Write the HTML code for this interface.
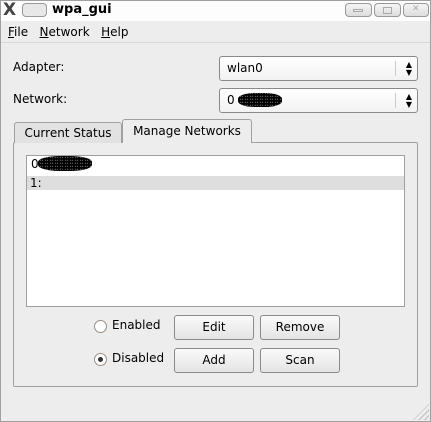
<!DOCTYPE html>
<html><head><meta charset="utf-8"><style>
*{box-sizing:border-box;margin:0;padding:0}
body{width:431px;height:422px;background:#ededed;font-family:"DejaVu Sans","Liberation Sans",sans-serif;font-size:12px;color:#000;position:relative;overflow:hidden}
.a{position:absolute}
.frame{left:0;top:0;width:431px;height:422px;border:1px solid #a0a0a0}
.btn{position:absolute;border:1px solid #8a8a8a;border-radius:3px;background:linear-gradient(#fafafa,#e4e4e4);text-align:center;line-height:22px;font-size:12px}
.combo{position:absolute;border:1px solid #8a8a8a;border-radius:3px;background:linear-gradient(#fff,#f2f2f2);padding-left:7px;line-height:22px}
.combo .sep{position:absolute;right:21px;top:4px;height:15px;border-left:1px solid #ccc}
.combo .ar{position:absolute;right:5px;font-size:8px;line-height:8px;top:4px}
.radio{position:absolute;width:13px;height:13px;border:1px solid #9a8f86;border-radius:50%;background:#fff}
.scr{position:absolute;border-radius:40%;background:
repeating-linear-gradient(90deg,rgba(0,0,0,.9) 0 2px,transparent 2px 3px,rgba(0,0,0,.8) 3px 4px,transparent 4px 5px),
repeating-linear-gradient(0deg,#000 0 1px,#555 1px 2px,#111 2px 3px)}
u{text-decoration:underline}
</style></head><body>
<div class="a frame"></div>
<div class="a" style="left:1px;top:1px;width:429px;height:20px;background:#fdfdfd"></div>
<div class="a" style="left:3px;top:0px;font-size:17px;line-height:20px;color:#444;font-weight:bold">X</div>
<div class="a" style="left:22px;top:3px;width:25px;height:14px;border:1px solid #999;border-radius:4px;background:#e8e8e8"></div>
<div class="a" style="left:52px;top:2px;font-weight:bold;font-size:13px;line-height:16px">wpa_gui</div>
<div class="a" style="left:345px;top:3px;width:27px;height:14px;border:1px solid #999;border-radius:4px;background:linear-gradient(#f5f5f5,#ddd)"></div>
<div class="a" style="left:374px;top:3px;width:27px;height:14px;border:1px solid #999;border-radius:4px;background:linear-gradient(#f5f5f5,#ddd)"></div>
<div class="a" style="left:403px;top:3px;width:26px;height:14px;border:1px solid #999;border-radius:4px;background:linear-gradient(#f5f5f5,#ddd)"></div>
<div class="a" style="left:353px;top:9px;width:10px;height:3px;border:1px solid #aaa"></div>
<div class="a" style="left:383px;top:7px;width:9px;height:7px;border:1px solid #aaa"></div>
<div class="a" style="left:412px;top:4px;font-size:9px;color:#aaa">✕</div>
<div class="a" style="left:1px;top:21px;width:429px;height:22px;background:#ededed;border-bottom:1px solid #d8d8d8"></div>
<div class="a" style="left:8px;top:24px;line-height:16px"><u>F</u>ile&nbsp;&nbsp;&nbsp;<u>N</u>etwork&nbsp;&nbsp;&nbsp;<u>H</u>elp</div>
<div class="a" style="left:13px;top:60px">Adapter:</div>
<div class="a" style="left:13px;top:92px">Network:</div>
<div class="combo" style="left:219px;top:56px;width:199px;height:25px">wlan0<div class="sep"></div><div class="ar">▲<br>▼</div></div>
<div class="combo" style="left:219px;top:88px;width:199px;height:25px">0<div class="sep"></div><div class="ar">▲<br>▼</div></div>
<div class="scr" style="left:238px;top:93px;width:44px;height:14px"></div>
<div class="a" style="left:13px;top:142px;width:405px;height:245px;border:1px solid #a0a0a0;border-radius:2px"></div>
<div class="a" style="left:14px;top:122px;width:108px;height:21px;border:1px solid #a0a0a0;border-bottom:none;border-radius:3px 3px 0 0;background:#e2e2e2;text-align:center;line-height:20px">Current Status</div>
<div class="a" style="left:122px;top:119px;width:130px;height:24px;border:1px solid #a0a0a0;border-bottom:none;border-radius:3px 3px 0 0;background:#ededed;text-align:center;line-height:22px">Manage Networks</div>
<div class="a" style="left:26px;top:155px;width:379px;height:152px;border:1px solid #a0a0a0;background:#fff"></div>
<div class="a" style="left:27px;top:176px;width:377px;height:14px;background:#dedede"></div>
<div class="a" style="left:31px;top:156px;line-height:17px">0</div>
<div class="scr" style="left:38px;top:156px;width:54px;height:15px"></div>
<div class="a" style="left:30px;top:175px;line-height:16px">1:</div>
<div class="radio" style="left:94px;top:320px"></div>
<div class="a" style="left:112px;top:318px">Enabled</div>
<div class="radio" style="left:94px;top:353px"></div>
<div class="a" style="left:98px;top:357px;width:5px;height:5px;border-radius:50%;background:#333"></div>
<div class="a" style="left:112px;top:351px">Disabled</div>
<div class="btn" style="left:174px;top:315px;width:80px;height:25px">Edit</div>
<div class="btn" style="left:260px;top:315px;width:80px;height:25px">Remove</div>
<div class="btn" style="left:174px;top:348px;width:80px;height:25px">Add</div>
<div class="btn" style="left:260px;top:348px;width:80px;height:25px">Scan</div>
<div class="a" style="left:413px;top:404px;width:16px;height:16px;background:repeating-linear-gradient(135deg,transparent 0 3px,#bbb 3px 4px);clip-path:polygon(100% 0,100% 100%,0 100%)"></div>
</body></html>
